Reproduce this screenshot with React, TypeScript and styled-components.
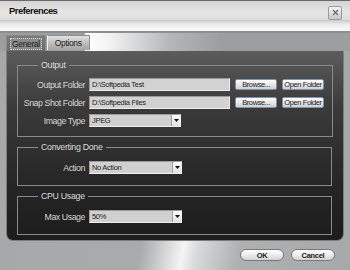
import React from "react";
import styled, { createGlobalStyle } from "styled-components";

const GlobalStyle = createGlobalStyle`
  html, body { margin: 0; padding: 0; background: #a7a9ab; }
  body { font-family: "Liberation Sans", Arial, sans-serif; }
`;

const Window = styled.div`
  width: 350px;
  height: 270px;
  display: flex;
  flex-direction: column;
  background: #a6a8aa;
  box-sizing: border-box;
  overflow: hidden;
`;

const TitleBar = styled.div`
  height: 20px;
  box-sizing: border-box;
  border-top: 1px solid #6a6a6a;
  background: linear-gradient(#d4d4d4, #e6e6e6 60%, #dcdcdc);
  display: flex;
  align-items: center;
  justify-content: space-between;
  padding: 0 8px 0 9px;
`;

const Title = styled.span`
  font-size: 9.5px;
  font-weight: bold;
  letter-spacing: -0.55px;
  color: #111;
`;

const CloseButton = styled.div`
  width: 14px;
  height: 14px;
  margin-top: 4px;
  box-sizing: border-box;
  border: 1px solid #9a9a9a;
  border-radius: 2px;
  background: linear-gradient(#f4f4f4, #c8c8c8);
  display: flex;
  align-items: center;
  justify-content: center;
`;

const Band = styled.div`
  height: 11px;
  background: linear-gradient(#c8c8c8, #ececec 40%, #fbfbfb);
  border-bottom: 2px solid #8d8f91;
`;

const TabStrip = styled.div`
  height: 18px;
  display: flex;
  align-items: flex-end;
  padding-left: 6px;
  background: linear-gradient(90deg, #9c9ea0 0px, #9c9ea0 84px, #ffffff 86px, #f2f2f2 110px, #b4b6b8 170px, #9c9ea0 220px);
`;

const Tab = styled.div<{ $active?: boolean }>`
  height: ${(p) => (p.$active ? "16px" : "15px")};
  margin-bottom: ${(p) => (p.$active ? "0" : "1px")};
  box-sizing: border-box;
  padding: 0 ${(p) => (p.$active ? "3px" : "7px")};
  display: flex;
  align-items: center;
  font-size: 8.5px;
  letter-spacing: -0.35px;
  color: #1a1a1a;
  background: ${(p) =>
    p.$active ? "linear-gradient(#7a7a7a, #6c6c6c)" : "linear-gradient(#e2e2e2, #b8b8b8 60%, #a4a4a4)"};
  border: 1px solid ${(p) => (p.$active ? "#8a8a8a" : "#8e8e8e")};
  border-left-color: ${(p) => (p.$active ? "#8a8a8a" : "#f2f2f2")};
  border-bottom: none;
  margin-right: ${(p) => (p.$active ? "1px" : "0")};
`;

const TabLabel = styled.span`
  padding: 0 1px;
  border: 1px dotted #cfcfcf;
  background: #8c8c8c;
`;

const Panel = styled.div`
  margin: 0 6px;
  height: 190px;
  box-sizing: border-box;
  border: 1px solid #7c7c7c;
  border-top: none;
  border-radius: 0 0 7px 7px;
  background: linear-gradient(#5c5c5c, #3a3a3a 30%, #262626 70%, #1c1c1c);
  padding: 8px 11px 0 10px;
  display: flex;
  flex-direction: column;
  gap: 4px;
`;

const Group = styled.fieldset<{ $pt: number; $pb: number }>`
  margin: 0;
  border: 1px solid #8a8a8a;
  padding: ${(p) => p.$pt}px 8px ${(p) => p.$pb}px 3px;
  display: flex;
  flex-direction: column;
  gap: 5px;
`;

const Legend = styled.legend`
  margin-left: 17px;
  padding: 0 3px;
  line-height: 12px;
  font-size: 8.8px;
  letter-spacing: -0.3px;
  color: #dcdcdc;
`;

const Row = styled.div`
  display: flex;
  align-items: center;
  height: 13px;
`;

const Label = styled.span`
  width: 64px;
  display: flex;
  justify-content: flex-end;
  margin-right: 4px;
  font-size: 8.8px;
  letter-spacing: -0.45px;
  color: #d6d6d6;
  white-space: nowrap;
`;

const TextBox = styled.div`
  width: 141px;
  height: 13px;
  box-sizing: border-box;
  background: #d2d2d2;
  border: 1px solid #ececec;
  border-top-color: #9a9a9a;
  border-left-color: #9a9a9a;
  font-size: 7.5px;
  letter-spacing: -0.3px;
  color: #222;
  padding-left: 2px;
  display: flex;
  align-items: center;
  white-space: nowrap;
`;

const SmallButton = styled.div`
  height: 11px;
  width: 42px;
  margin-left: 5px;
  box-sizing: border-box;
  border: 1px solid #7f93ad;
  border-radius: 2px;
  background: linear-gradient(#ffffff, #e4e4e4 55%, #d0d0d0);
  font-size: 7.5px;
  letter-spacing: -0.4px;
  color: #1a1a1a;
  display: flex;
  align-items: center;
  justify-content: center;
  white-space: nowrap;
`;

const Select = styled.div<{ $w: number }>`
  width: ${(p) => p.$w}px;
  height: 13px;
  box-sizing: border-box;
  background: #d0d0d0;
  border: 1px solid #efefef;
  border-top-color: #9a9a9a;
  border-left-color: #9a9a9a;
  display: flex;
  align-items: center;
  justify-content: space-between;
  padding-left: 2px;
  font-size: 7.5px;
  letter-spacing: -0.3px;
  color: #222;
`;

const Arrow = styled.div`
  width: 9px;
  height: 11px;
  box-sizing: border-box;
  background: linear-gradient(#ffffff, #e0e0e0);
  border-left: 1px solid #a0a0a0;
  display: flex;
  align-items: center;
  justify-content: center;
`;

const Footer = styled.div`
  flex: 1;
  display: flex;
  justify-content: flex-end;
  align-items: flex-start;
  padding: 8px 15px 0 0;
  gap: 7px;
  background: linear-gradient(100deg, #a6a8aa 0%, #a8aaac 40%, #f4f4f4 52%, #d8d9da 56%, #aeb0b2 68%, #a6a8aa 100%);
`;

const DialogButton = styled.div`
  width: 44px;
  height: 12px;
  box-sizing: border-box;
  border: 1px solid #7a7a7a;
  border-radius: 6px;
  background: linear-gradient(#ffffff, #ececec 50%, #d2d2d2);
  font-size: 7.5px;
  font-weight: bold;
  letter-spacing: -0.3px;
  color: #222;
  display: flex;
  align-items: center;
  justify-content: center;
`;

const DownArrow = () => (
  <svg width="5" height="3" viewBox="0 0 5 3">
    <path d="M0 0h5L2.5 3z" fill="#111" />
  </svg>
);

const CloseIcon = () => (
  <svg width="7" height="7" viewBox="0 0 7 7">
    <path d="M1 1l5 5M6 1L1 6" stroke="#666" strokeWidth="1.1" />
  </svg>
);

const FolderRow: React.FC<{ label: string; value: string }> = ({ label, value }) => (
  <Row>
    <Label>{label}</Label>
    <TextBox>{value}</TextBox>
    <SmallButton>Browse...</SmallButton>
    <SmallButton>Open Folder</SmallButton>
  </Row>
);

const SelectRow: React.FC<{ label: string; value: string; width?: number }> = ({ label, value, width = 93 }) => (
  <Row>
    <Label>{label}</Label>
    <Select $w={width}>
      {value}
      <Arrow>
        <DownArrow />
      </Arrow>
    </Select>
  </Row>
);

export default function App() {
  return (
    <>
      <GlobalStyle />
      <Window>
        <TitleBar>
          <Title>Preferences</Title>
          <CloseButton>
            <CloseIcon />
          </CloseButton>
        </TitleBar>
        <Band />
        <TabStrip>
          <Tab $active>
            <TabLabel>General</TabLabel>
          </Tab>
          <Tab>Options</Tab>
        </TabStrip>
        <Panel>
          <Group $pt={7} $pb={9}>
            <Legend>Output</Legend>
            <FolderRow label="Output Folder" value="D:\Softpedia Test" />
            <FolderRow label="Snap Shot Folder" value="D:\Softpedia Files" />
            <SelectRow label="Image Type" value="JPEG" width={92} />
          </Group>
          <Group $pt={8} $pb={11}>
            <Legend>Converting Done</Legend>
            <SelectRow label="Action" value="No Action" />
          </Group>
          <Group $pt={8} $pb={11}>
            <Legend>CPU Usage</Legend>
            <SelectRow label="Max Usage" value="50%" />
          </Group>
        </Panel>
        <Footer>
          <DialogButton>OK</DialogButton>
          <DialogButton>Cancel</DialogButton>
        </Footer>
      </Window>
    </>
  );
}
